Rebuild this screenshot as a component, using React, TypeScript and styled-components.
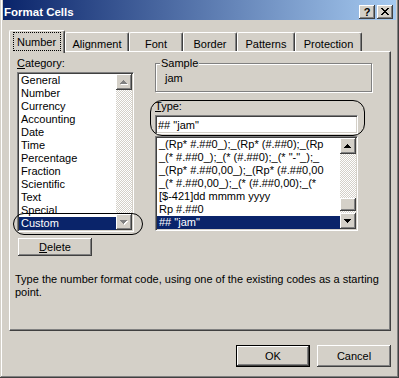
import styled, { createGlobalStyle, css } from "styled-components";

const Global = createGlobalStyle`
  html, body {
    margin: 0;
    padding: 0;
    background: #D4D0C8;
  }
  * {
    box-sizing: border-box;
  }
`;

const raised = css`
  background: #D4D0C8;
  box-shadow: inset -1px -1px #404040, inset 1px 1px #fff, inset -2px -2px #808080;
`;

const sunken = css`
  background: #fff;
  border: 1px solid;
  border-color: #808080 #fff #fff #808080;
  padding: 1px;
  box-shadow: inset 1px 1px #404040, inset -1px -1px #D4D0C8;
`;

const Window = styled.div`
  width: 399px;
  height: 378px;
  display: flex;
  flex-direction: column;
  padding: 0 3px 3px 3px;
  background: #D4D0C8;
  box-shadow: inset -1px -1px #404040, inset 1px 0 #D4D0C8, inset -2px -2px #808080, inset 2px 0 #fff;
  font-family: "Liberation Sans", Arial, sans-serif;
  font-size: 11px;
  color: #000;
`;

const TitleBar = styled.div`
  flex: none;
  height: 20px;
  display: flex;
  align-items: center;
  justify-content: space-between;
  padding: 3px 3px 0 1px;
  background: linear-gradient(to right, #0A246A, #A6CAF0);
`;

const Title = styled.span`
  color: #fff;
  font-weight: bold;
  font-size: 11.5px;
  line-height: 14px;
`;

const CaptionButtons = styled.div`
  display: flex;
  gap: 2px;
`;

const CaptionButton = styled.div`
  ${raised};
  width: 16px;
  height: 14px;
  display: flex;
  align-items: center;
  justify-content: center;
  font-weight: bold;
  font-size: 11px;
  line-height: 12px;
`;

const Body = styled.div`
  flex: 1;
  display: flex;
  flex-direction: column;
  padding: 10px 5px 0 6px;
`;

const TabRow = styled.div`
  position: relative;
  z-index: 1;
  height: 21px;
  display: flex;
  align-items: flex-end;
`;

const Tab = styled.div<{ $w: number; $active?: boolean }>`
  flex: none;
  width: ${(p) => p.$w}px;
  height: ${(p) => (p.$active ? 23 : 19)}px;
  margin-bottom: ${(p) => (p.$active ? -2 : 0)}px;
  padding-top: ${(p) => (p.$active ? 1 : 5)}px;
  background: #D4D0C8;
  border-top: 1px solid #fff;
  border-left: 1px solid #fff;
  border-right: 1px solid #404040;
  border-radius: 2px 2px 0 0;
  box-shadow: inset -1px 0 #808080;
  text-align: center;
  line-height: 13px;
  white-space: nowrap;
`;

const Focus = styled.span`
  display: inline-block;
  border: 1px dotted #000;
  padding: 3px 4px 1px 3px;
`;

const Panel = styled.div`
  position: relative;
  height: 280px;
  padding: 5px 0 0 5px;
  border-top: 1px solid #fff;
  border-left: 1px solid #fff;
  border-right: 1px solid #404040;
  border-bottom: 1px solid #404040;
  box-shadow: inset -1px -1px #808080;
`;

const Columns = styled.div`
  display: flex;
  gap: 21px;
  padding-left: 2px;
`;

const LeftCol = styled.div`
  width: 117px;
  display: flex;
  flex-direction: column;
`;

const RightCol = styled.div`
  width: 217px;
  display: flex;
  flex-direction: column;
`;

const Label = styled.div<{ $top?: number }>`
  line-height: 13px;
  margin-top: ${(p) => p.$top ?? 0}px;
  margin-bottom: 2px;
`;

const ListBox = styled.div<{ $h: number; $w: number }>`
  ${sunken};
  width: ${(p) => p.$w}px;
  height: ${(p) => p.$h}px;
  display: flex;
`;

const Rows = styled.div`
  flex: 1;
  min-width: 0;
  overflow: hidden;
`;

const Row = styled.div<{ $selected?: boolean }>`
  height: 13px;
  line-height: 13px;
  padding-left: 2px;
  white-space: nowrap;
  overflow: hidden;
  background: ${(p) => (p.$selected ? "#0A246A" : "transparent")};
  color: ${(p) => (p.$selected ? "#fff" : "#000")};
`;

const ScrollBar = styled.div`
  flex: none;
  width: 16px;
  display: flex;
  flex-direction: column;
`;

const ArrowButton = styled.div`
  ${raised};
  flex: none;
  height: 16px;
  display: flex;
  align-items: center;
  justify-content: center;
`;

const Track = styled.div`
  flex: 1;
  display: flex;
  flex-direction: column;
  justify-content: flex-end;
  padding-bottom: 2px;
  background: repeating-conic-gradient(#D4D0C8 0 25%, #fff 0 50%) 0 0 / 2px 2px;
`;

const Thumb = styled.div`
  ${raised};
  height: 13px;
`;

const Button = styled.button<{ $h: number; $default?: boolean }>`
  ${raised};
  width: 74px;
  height: ${(p) => p.$h}px;
  padding: 0;
  border: ${(p) => (p.$default ? "1px solid #000" : "none")};
  font-family: "Liberation Sans", Arial, sans-serif;
  font-size: 11px;
  color: #000;
  line-height: 13px;
`;

const DeleteButton = styled(Button)`
  margin: 6px 0 0 1px;
`;

const Group = styled.div`
  position: relative;
  margin-top: 6px;
  height: 29px;
  border: 1px solid #808080;
  box-shadow: inset 1px 1px #fff, 1px 1px #fff;
  padding: 8px 0 0 9px;
  line-height: 13px;
`;

const Legend = styled.span`
  position: absolute;
  top: -7px;
  left: 4px;
  padding: 0 1px;
  background: #D4D0C8;
  line-height: 13px;
`;

const TextField = styled.input`
  ${sunken};
  width: 203px;
  height: 19px;
  margin: 0 0 2px 0;
  padding: 1px 0 1px 2px;
  font-family: "Liberation Sans", Arial, sans-serif;
  font-size: 11px;
  color: #000;
  outline: none;
`;

const Description = styled.div`
  margin-top: 17px;
  width: 372px;
  line-height: 13px;
`;

const Oval = styled.div<{ $x: number; $y: number; $w: number; $h: number }>`
  position: absolute;
  left: ${(p) => p.$x}px;
  top: ${(p) => p.$y}px;
  width: ${(p) => p.$w}px;
  height: ${(p) => p.$h}px;
  border: 1px solid #000;
  border-radius: 12px;
  pointer-events: none;
`;

const Footer = styled.div`
  display: flex;
  justify-content: flex-end;
  gap: 7px;
  margin-top: 14px;
`;

const UP = "M3 0h1v1h-1z M2 1h3v1h-3z M1 2h5v1h-5z M0 3h7v1h-7z";
const DOWN = "M0 0h7v1h-7z M1 1h5v1h-5z M2 2h3v1h-3z M3 3h1v1h-1z";

function Arrow({ dir, disabled }: { dir: "up" | "down"; disabled?: boolean }) {
  const d = dir === "up" ? UP : DOWN;
  return (
    <svg width="8" height="5" viewBox="0 0 8 5" shapeRendering="crispEdges">
      {disabled && <path d={d} fill="#fff" transform="translate(1 1)" />}
      <path d={d} fill={disabled ? "#808080" : "#000"} />
    </svg>
  );
}

function CloseGlyph() {
  return (
    <svg width="8" height="7" viewBox="0 0 8 7" shapeRendering="crispEdges">
      <path
        d="M0 0h2v1h-2z M6 0h2v1h-2z M1 1h2v1h-2z M5 1h2v1h-2z M2 2h4v1h-4z M3 3h2v1h-2z M2 4h4v1h-4z M1 5h2v1h-2z M5 5h2v1h-2z M0 6h2v1h-2z M6 6h2v1h-2z"
        fill="#000"
      />
    </svg>
  );
}

const tabs = [
  { label: "Number", w: 56 },
  { label: "Alignment", w: 64 },
  { label: "Font", w: 54 },
  { label: "Border", w: 54 },
  { label: "Patterns", w: 58 },
  { label: "Protection", w: 67 },
];

const categories = [
  "General",
  "Number",
  "Currency",
  "Accounting",
  "Date",
  "Time",
  "Percentage",
  "Fraction",
  "Scientific",
  "Text",
  "Special",
  "Custom",
];

// only the part of each code that fits before the scroll bar
const formats = [
  "_(Rp* #.##0_);_(Rp* (#.##0);_(Rp",
  '_(* #.##0_);_(* (#.##0);_(* "-"_);_',
  "_(Rp* #.##0,00_);_(Rp* (#.##0,00",
  "_(* #.##0,00_);_(* (#.##0,00);_(*",
  "[$-421]dd mmmm yyyy",
  "Rp #.##0",
  '## "jam"',
];

export default function App() {
  return (
    <>
      <Global />
      <Window>
        <TitleBar>
          <Title>Format Cells</Title>
          <CaptionButtons>
            <CaptionButton>?</CaptionButton>
            <CaptionButton>
              <CloseGlyph />
            </CaptionButton>
          </CaptionButtons>
        </TitleBar>
        <Body>
          <TabRow>
            {tabs.map((t, i) => (
              <Tab key={t.label} $w={t.w} $active={i === 0}>
                {i === 0 ? <Focus>{t.label}</Focus> : t.label}
              </Tab>
            ))}
          </TabRow>
          <Panel>
            <Columns>
              <LeftCol>
                <Label>
                  <u>C</u>ategory:
                </Label>
                <ListBox $w={117} $h={160}>
                  <Rows>
                    {categories.map((c) => (
                      <Row key={c} $selected={c === "Custom"}>
                        {c}
                      </Row>
                    ))}
                  </Rows>
                  <ScrollBar>
                    <ArrowButton>
                      <Arrow dir="up" disabled />
                    </ArrowButton>
                    <Track />
                    <ArrowButton>
                      <Arrow dir="down" disabled />
                    </ArrowButton>
                  </ScrollBar>
                </ListBox>
                <DeleteButton $h={18}>
                  <u>D</u>elete
                </DeleteButton>
              </LeftCol>
              <RightCol>
                <Group>
                  <Legend>Sample</Legend>
                  jam
                </Group>
                <Label $top={8}>
                  <u>T</u>ype:
                </Label>
                <TextField defaultValue={'## "jam"'} readOnly />
                <ListBox $w={203} $h={95}>
                  <Rows>
                    {formats.map((f) => (
                      <Row key={f} $selected={f === '## "jam"'}>
                        {f}
                      </Row>
                    ))}
                  </Rows>
                  <ScrollBar>
                    <ArrowButton>
                      <Arrow dir="up" />
                    </ArrowButton>
                    <Track>
                      <Thumb />
                    </Track>
                    <ArrowButton>
                      <Arrow dir="down" />
                    </ArrowButton>
                  </ScrollBar>
                </ListBox>
              </RightCol>
            </Columns>
            <Description>
              Type the number format code, using one of the existing codes as a starting point.
            </Description>
            <Oval $x={3} $y={161} $w={130} $h={22} />
            <Oval $x={140} $y={48} $w={215} $h={36} />
          </Panel>
          <Footer>
            <Button $h={22} $default>
              OK
            </Button>
            <Button $h={22}>Cancel</Button>
          </Footer>
        </Body>
      </Window>
    </>
  );
}
